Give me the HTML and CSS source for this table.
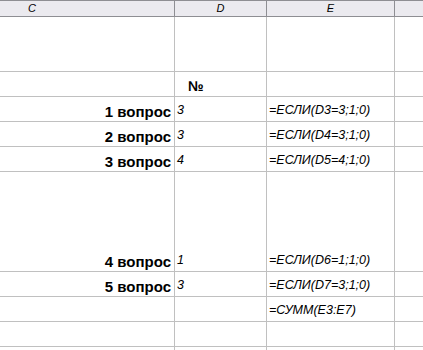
FILE: index.html
```html
<!DOCTYPE html>
<html>
<head>
<meta charset="utf-8">
<link rel="stylesheet" href="styles.css">
</head>
<body>
<div class="sheet">
  <div class="hd hc">C</div>
  <div class="hd">D</div>
  <div class="hd">E</div>
  <div class="hd last"></div>

  <div class="c"></div><div class="c"></div><div class="c"></div><div class="c last"></div>

  <div class="c"></div><div class="c num-sign">№</div><div class="c"></div><div class="c last"></div>

  <div class="c q">1 вопрос</div><div class="c v">3</div><div class="c f">=ЕСЛИ(D3=3;1;0)</div><div class="c last"></div>
  <div class="c q">2 вопрос</div><div class="c v">3</div><div class="c f">=ЕСЛИ(D4=3;1;0)</div><div class="c last"></div>
  <div class="c q">3 вопрос</div><div class="c v">4</div><div class="c f">=ЕСЛИ(D5=4;1;0)</div><div class="c last"></div>

  <div class="c q">4 вопрос</div><div class="c v">1</div><div class="c f">=ЕСЛИ(D6=1;1;0)</div><div class="c last"></div>
  <div class="c q">5 вопрос</div><div class="c v">3</div><div class="c f">=ЕСЛИ(D7=3;1;0)</div><div class="c last"></div>
  <div class="c"></div><div class="c"></div><div class="c f">=СУММ(E3:E7)</div><div class="c last"></div>
  <div class="c"></div><div class="c"></div><div class="c"></div><div class="c last"></div>
  <div class="c"></div><div class="c"></div><div class="c"></div><div class="c last"></div>
</div>
</body>
</html>
```

FILE: styles.css
```css
html, body {
  margin: 0;
  padding: 0;
  background: #ffffff;
  overflow: hidden;
}
body {
  width: 423px;
  height: 350px;
  font-family: "Liberation Sans", Arial, sans-serif;
}
.sheet {
  display: grid;
  grid-template-columns: 175px 92px 128px 1fr;
  grid-template-rows: 16px 55px 25px 25px 25px 25px 100px 25px 25px 25px 3px;
  height: 349px;
  overflow: hidden;
  border-top: 1px solid #8e8e93;
}
.hd {
  background: #ebeaef;
  border-right: 1px solid #8e8e93;
  border-bottom: 1px solid #8e8e93;
  box-sizing: border-box;
  font-size: 11px;
  font-style: italic;
  color: #000;
  text-align: center;
  line-height: 15px;
}
.hd.hc {
  text-align: left;
  padding-left: 28px;
}
.c {
  border-right: 1px solid #c0c0c0;
  border-bottom: 1px solid #c0c0c0;
  display: flex;
  align-items: flex-end;
  box-sizing: border-box;
  padding-bottom: 3px;
  color: #000;
  white-space: nowrap;
  overflow: hidden;
}
.last, .hd.last {
  border-right: none;
}
.q {
  justify-content: flex-end;
  padding-right: 3px;
  font-weight: bold;
  font-size: 15px;
  padding-bottom: 1px;
}
.num-sign {
  font-weight: bold;
  font-size: 14px;
  padding-left: 13px;
  padding-bottom: 2px;
}
.v {
  font-style: italic;
  font-size: 12.5px;
  padding-left: 2px;
  padding-bottom: 4px;
}
.f {
  font-style: italic;
  font-size: 12.5px;
  padding-left: 2px;
  padding-bottom: 4px;
}
```
